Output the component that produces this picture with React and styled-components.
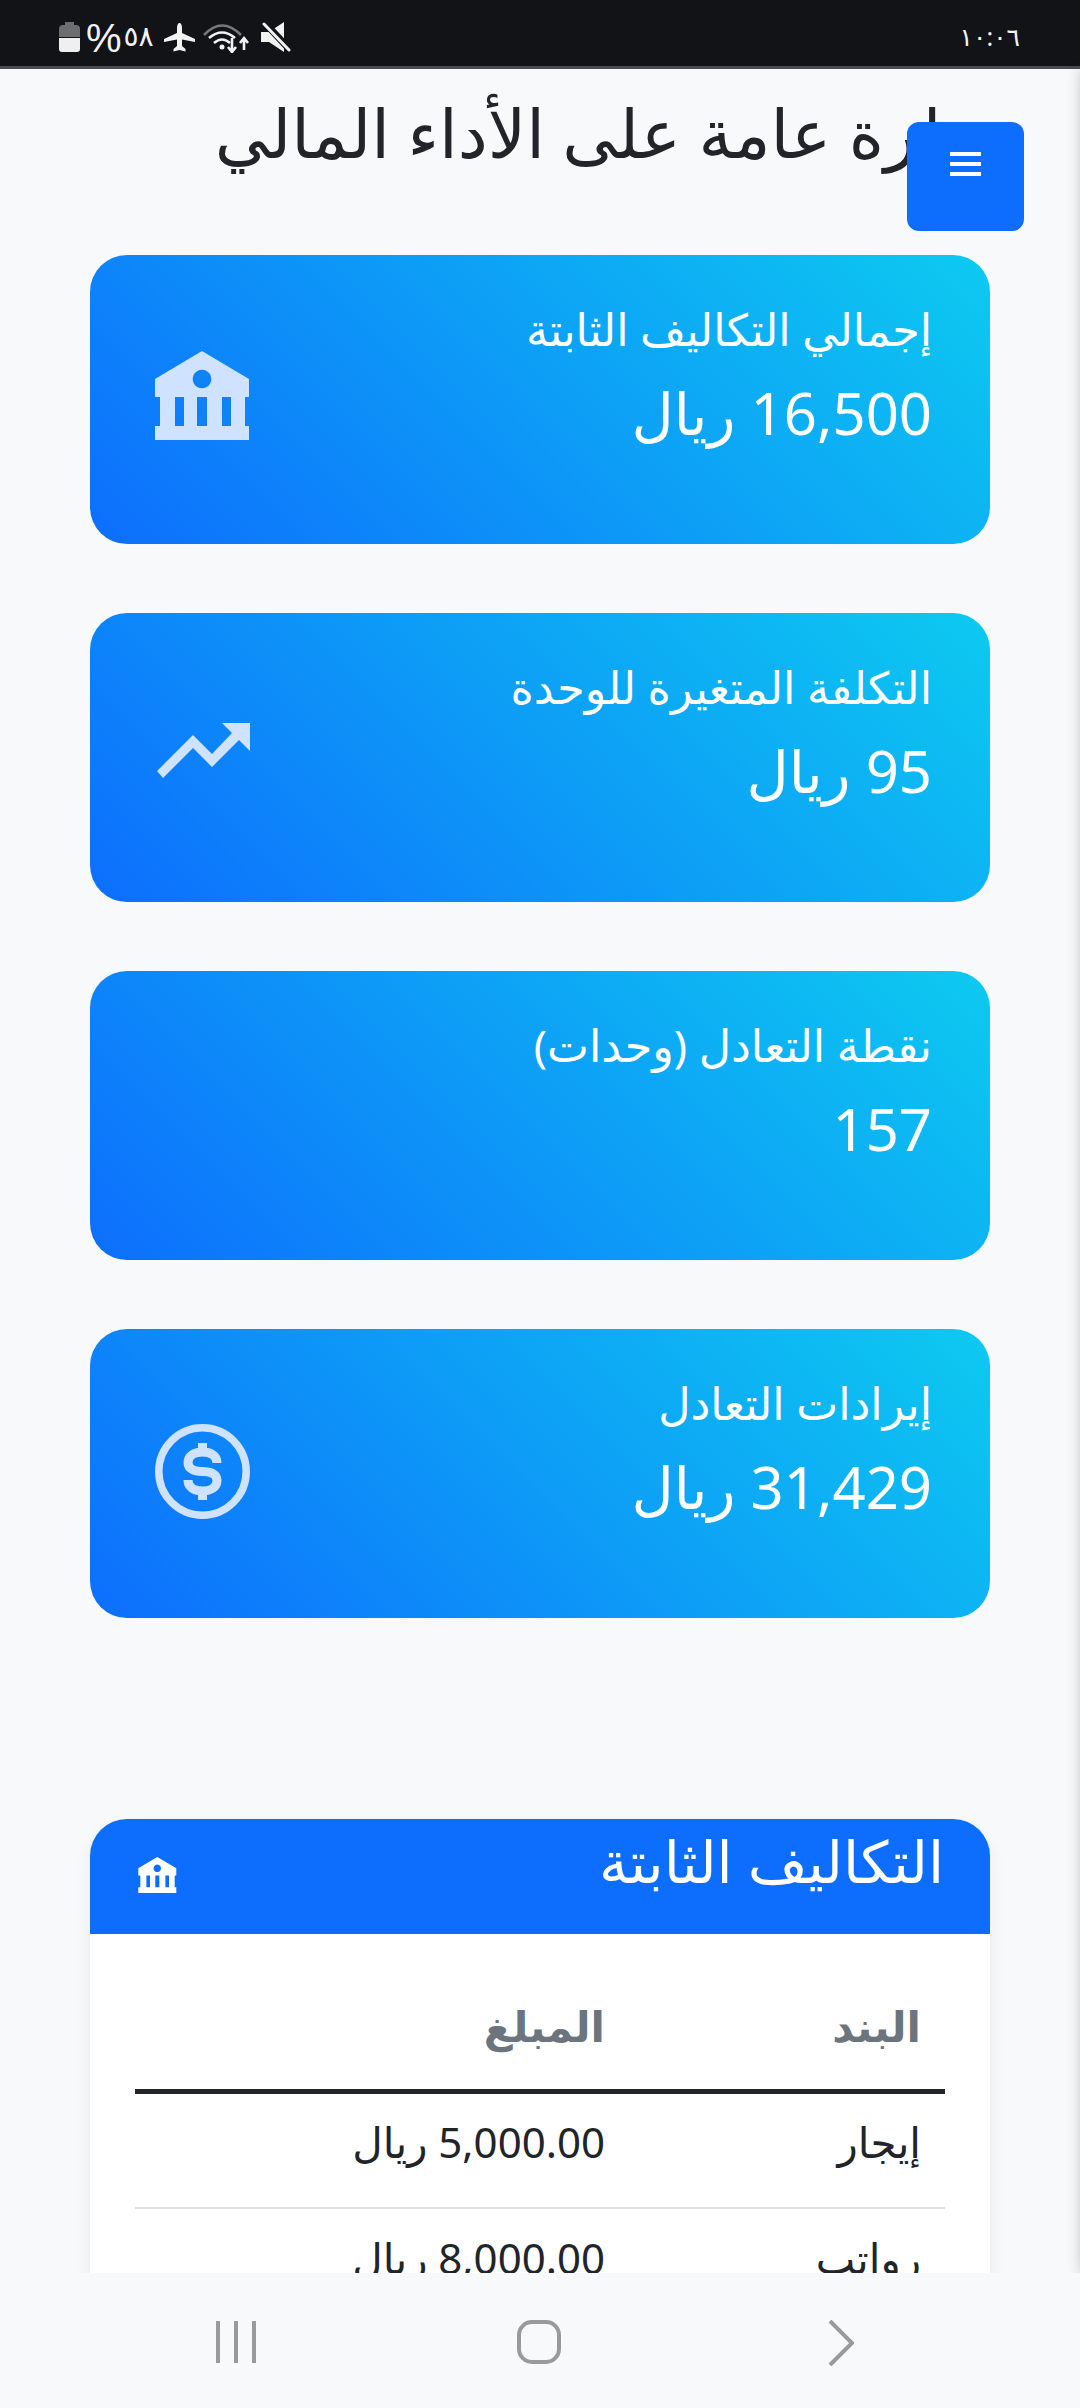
import React from 'react'
import styled, { createGlobalStyle } from 'styled-components'

const Global = createGlobalStyle`
  * { box-sizing: border-box; }
  html, body { margin: 0; padding: 0; background: #f8f9fa; }
  body { font-family: "Noto Sans", "DejaVu Sans", sans-serif; color: #212529; }
`

const Screen = styled.div`
  width: 1080px;
  height: 2408px;
  overflow: hidden;
  position: relative;
  background: #f8f9fa;
`

const StatusBar = styled.div`
  height: 69px;
  background: #121317;
  border-bottom: 3px solid #4b4b52;
  display: flex;
  justify-content: space-between;
  align-items: flex-start;
  padding: 21px 60px 0 59px;
  color: #f2f2f2;
`

const StatusLeft = styled.div`
  display: flex;
  align-items: flex-start;
`

const StatusIcon = styled.svg`
  display: block;
  flex: none;
  margin-left: ${(p) => p.$gap || 0}px;
  margin-top: ${(p) => p.$top || 0}px;
`

const Percent = styled.span`
  font-family: "Liberation Sans", sans-serif;
  font-size: 40px;
  line-height: 34px;
  margin-left: 6px;
`

const BatteryText = styled.span`
  font-family: "Noto Sans", "DejaVu Sans", sans-serif;
  font-size: 28px;
  line-height: 28px;
  margin-left: 2px;
`

const Clock = styled.span`
  font-family: "Noto Sans", "DejaVu Sans", sans-serif;
  font-size: 25px;
  line-height: 30px;
`

const Main = styled.main`
  direction: rtl;
  padding: 0 90px;
`

const Title = styled.h1`
  margin: 0 -5px 0 0;
  font-size: 67.3px;
  font-weight: 400;
  line-height: 1.2;
  padding-top: 23px;
  height: 186px;
  white-space: nowrap;
`

const MenuButton = styled.button`
  position: absolute;
  left: 907px;
  top: 122px;
  width: 117px;
  height: 109px;
  border: 0;
  border-radius: 12px;
  background: #0d6efd;
  padding: 30px 0 0;
  display: flex;
  justify-content: center;
  align-items: flex-start;
`

const MenuLines = styled.svg`
  width: 31px;
  height: 24px;
  display: block;
`

/* shadow of the closed side menu, parked just off the right edge */
const SideShadow = styled.div`
  position: absolute;
  left: 1080px;
  top: 69px;
  bottom: 135px;
  width: 40px;
  box-shadow: 0 0 14px rgba(0, 0, 0, 0.2);
`

const Cards = styled.div`
  display: flex;
  flex-direction: column;
  gap: 69px;
`

const Card = styled.div`
  height: 289px;
  border-radius: 37px;
  background: linear-gradient(45deg, #0d6efd, #0dcaf0);
  color: #fff;
  padding: 0 58px 0 65px;
  display: flex;
  justify-content: space-between;
  align-items: center;
`

const CardText = styled.div`
  padding-bottom: 49px;
`

const CardLabel = styled.div`
  font-size: 44.5px;
  line-height: 1.2;
`

const CardValue = styled.div`
  font-size: 58px;
  line-height: 1.2;
  margin-top: 23px;
`

const CardIcon = styled.svg`
  width: 95px;
  height: 95px;
  fill: #cfe2ff;
  flex: none;
  margin-bottom: 4px;
  display: block;
`

const TableCard = styled.section`
  margin-top: 201px;
  border-radius: 37px 37px 0 0;
  background: #fff;
  box-shadow: 0 8px 16px rgba(0, 0, 0, 0.07);
  overflow: hidden;
`

const TableHeader = styled.header`
  height: 115px;
  background: #0d6efd;
  color: #fff;
  padding: 0 46px 0 48px;
  display: flex;
  justify-content: space-between;
  align-items: flex-start;
`

const TableTitle = styled.h2`
  margin: 0;
  font-size: 58px;
  font-weight: 400;
  line-height: 84px;
`

const SmallBank = styled.svg`
  width: 39px;
  height: 36px;
  fill: #fff;
  margin-top: 38px;
  display: block;
`

const TableBody = styled.div`
  padding: 45px;
`

const Table = styled.table`
  width: 100%;
  border-collapse: collapse;
  table-layout: fixed;
`

const HeadCell = styled.th`
  height: 112px;
  padding: 0 24px 16px;
  text-align: right;
  font-size: 42px;
  font-weight: 700;
  color: #6c757d;
  border-bottom: 5px solid #212529;
  width: ${(p) => p.$width || 'auto'};
`

const Cell = styled.td`
  height: 117px;
  padding: 0 24px 18px;
  font-size: 42px;
  color: #212529;
  border-bottom: 2px solid #dee2e6;
`

const NavBar = styled.nav`
  position: absolute;
  left: 0;
  right: 0;
  bottom: 0;
  height: 135px;
  background: #f8f9fa;
  padding: 47px 0 0 85px;
  display: grid;
  grid-template-columns: repeat(3, 302.5px);
  justify-items: center;
  align-items: start;
`

const NavIcon = styled.svg`
  display: block;
  fill: none;
  stroke: #9a9a9a;
  stroke-width: 4;
`

const BankShape = () => (
  <path
    fillRule="evenodd"
    d="M47 0 L94 28 V46 H90 V75 H94 V89 H0 V75 H5 V46 H0 V28 Z M47 18.7 a9.3 9.3 0 1 0 0.01 0 Z M20 46 V75 H29 V46 Z M42 46 V75 H52 V46 Z M67 46 V75 H76 V46 Z"
  />
)

const cards = [
  { label: 'إجمالي التكاليف الثابتة', value: '16,500 ريال', icon: 'bank' },
  { label: 'التكلفة المتغيرة للوحدة', value: '95 ريال', icon: 'trend' },
  { label: 'نقطة التعادل (وحدات)', value: '157' },
  { label: 'إيرادات التعادل', value: '31,429 ريال', icon: 'dollar' },
]

const rows = [
  ['إيجار', '5,000.00 ريال'],
  ['رواتب', '8,000.00 ريال'],
]

function Icon({ name }) {
  if (name === 'bank') {
    return (
      <CardIcon viewBox="0 -1 95 95">
        <BankShape />
      </CardIcon>
    )
  }
  if (name === 'trend') {
    return (
      <CardIcon viewBox="0 0 95 95">
        <path d="M2 63 L38 27 L57 46 L77 25 L67 15 H95 V43 L84 32 L57 59 L38 40 L8 70 Z" />
      </CardIcon>
    )
  }
  if (name === 'dollar') {
    return (
      <CardIcon viewBox="0 0 95 95">
        <circle cx="47.5" cy="47.5" r="43.7" fill="none" stroke="#cfe2ff" strokeWidth="7.5" />
        <path
          fill="none"
          stroke="#cfe2ff"
          strokeWidth="9"
          d="M62 39 C62 31 55 28 47.5 28 C39 28 33 32 33 38.5 C33 45 39 47.5 47.5 47.5 C56 47.5 62 50 62 56.5 C62 63 56 67 47.5 67 C39 67 33 63 33 56 M47.5 19 V28 M47.5 67 V76"
        />
      </CardIcon>
    )
  }
  return null
}

function App() {
  return (
    <Screen>
      <Global />
      <StatusBar>
        <StatusLeft>
          <StatusIcon width="21" height="30" viewBox="0 0 21 30" $top={1}>
            <path fill="#6d6d6f" d="M6 0 H15 V3 H17 a4 4 0 0 1 4 4 V15 H0 V7 a4 4 0 0 1 4 -4 H6 Z" />
            <path fill="#efefef" d="M0 16 H21 V27 a3 3 0 0 1 -3 3 H3 a3 3 0 0 1 -3 -3 Z" />
          </StatusIcon>
          <Percent>%</Percent>
          <BatteryText>٥٨</BatteryText>
          <StatusIcon width="31" height="29" viewBox="0 0 31 29" $gap={10} $top={2} fill="#f2f2f2">
            <path d="M15.5 0 C17 0 18 2 18 5 V10 L31 16 V19 L18 16.5 V23 L21.5 26 V28.5 L15.5 27 L9.5 28.5 V26 L13 23 V16.5 L0 19 V16 L13 10 V5 C13 2 14 0 15.5 0 Z" />
          </StatusIcon>
          <StatusIcon width="46" height="32" viewBox="0 0 46 32" $gap={8} fill="none" strokeWidth="2.6">
            <path stroke="#77777a" d="M1 14 Q19 -5 38 14" />
            <path stroke="#f2f2f2" d="M6 17 Q19 6 32 17" />
            <path stroke="#f2f2f2" d="M11 22 Q19 15 27 22" />
            <circle cx="19" cy="26" r="2.5" fill="#f2f2f2" stroke="none" />
            <path stroke="#f2f2f2" d="M29 17 V30 M25 26 L29 31 L33 26 M41 29 V18 M37 22 L41 17 L45 22" />
          </StatusIcon>
          <StatusIcon width="30" height="30" viewBox="0 0 30 30" $gap={12} $top={1}>
            <path fill="#f2f2f2" d="M0 10 H8 L23 0 V30 L8 20 H0 Z" />
            <path stroke="#121317" strokeWidth="7" d="M2 -1 L31 30" />
            <path stroke="#f2f2f2" strokeWidth="3" strokeLinecap="round" d="M3 2 L28 28" />
          </StatusIcon>
        </StatusLeft>
        <Clock>١٠:٠٦</Clock>
      </StatusBar>
      <Main>
        <Title>نظرة عامة على الأداء المالي</Title>
        <Cards>
          {cards.map((c) => (
            <Card key={c.label}>
              <CardText>
                <CardLabel>{c.label}</CardLabel>
                <CardValue>{c.value}</CardValue>
              </CardText>
              <Icon name={c.icon} />
            </Card>
          ))}
        </Cards>
        <TableCard>
          <TableHeader>
            <TableTitle>التكاليف الثابتة</TableTitle>
            <SmallBank viewBox="0 0 95 89">
              <BankShape />
            </SmallBank>
          </TableHeader>
          <TableBody>
            <Table>
              <thead>
                <tr>
                  <HeadCell $width="316px">البند</HeadCell>
                  <HeadCell>المبلغ</HeadCell>
                </tr>
              </thead>
              <tbody>
                {rows.map((r) => (
                  <tr key={r[0]}>
                    <Cell>{r[0]}</Cell>
                    <Cell>{r[1]}</Cell>
                  </tr>
                ))}
              </tbody>
            </Table>
          </TableBody>
        </TableCard>
      </Main>
      <SideShadow />
      <MenuButton aria-label="menu">
        <MenuLines viewBox="0 0 31 24">
          <path fill="#fff" d="M0 0 H31 V4 H0 Z M0 10 H31 V14 H0 Z M0 20 H31 V24 H0 Z" />
        </MenuLines>
      </MenuButton>
      <NavBar>
        <NavIcon width="40" height="44" viewBox="0 0 40 44">
          <path d="M2 1 V43 M20 1 V43 M38 1 V43" />
        </NavIcon>
        <NavIcon width="44" height="44" viewBox="0 0 44 44">
          <rect x="2" y="2" width="40" height="40" rx="13" />
        </NavIcon>
        <NavIcon width="26" height="46" viewBox="0 0 26 46">
          <path d="M2 1 L24 23 L2 45" />
        </NavIcon>
      </NavBar>
    </Screen>
  )
}

export default App
